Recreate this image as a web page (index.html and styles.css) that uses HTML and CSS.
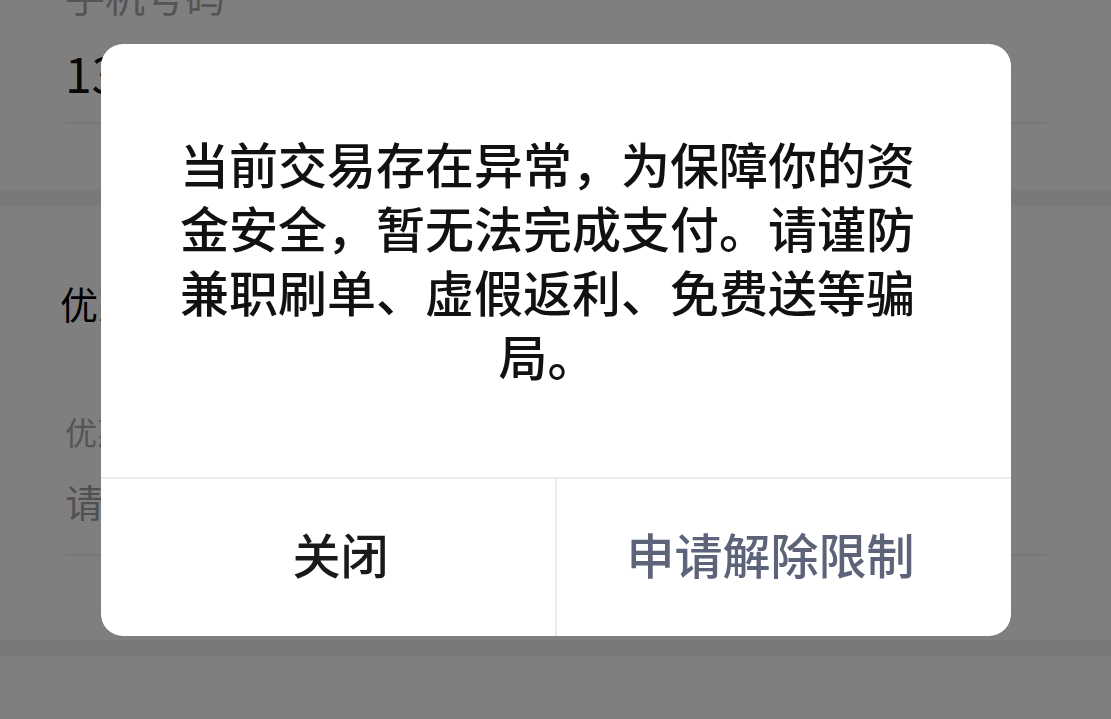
FILE: index.html
```html
<!DOCTYPE html>
<html lang="zh-CN">
<head>
<meta charset="utf-8">
<title>支付提示</title>
<link rel="stylesheet" href="styles.css">
</head>
<body>
<div class="page">
  <section class="card card-top">
    <div class="field">
      <div class="field-label">手机号码</div>
      <div class="field-value">13800000000</div>
    </div>
  </section>
  <div class="band"></div>
  <section class="card card-mid">
    <div class="card-title">优惠券</div>
    <div class="field field-b">
      <div class="field-label small">优惠码</div>
      <div class="field-input">请输入优惠码</div>
    </div>
  </section>
  <div class="band"></div>
  <section class="card card-bottom"></section>
</div>

<div class="overlay">
  <div class="dialog">
    <p class="dialog-msg">当前交易存在异常，为保障你的资金安全，暂无法完成支付。请谨防兼职刷单、虚假返利、免费送等骗局。</p>
    <div class="dialog-actions">
      <button class="btn btn-close">关闭</button>
      <button class="btn btn-appeal">申请解除限制</button>
    </div>
  </div>
</div>
</body>
</html>
```

FILE: styles.css
```css
* { box-sizing: border-box; }
html, body {
  margin: 0;
  padding: 0;
  height: 100%;
  overflow: hidden;
}
body {
  font-family: "Noto Sans CJK SC", "Noto Sans", sans-serif;
  background: #fff;
}
.page {
  margin-top: -30px;
}
.card {
  background: #fff;
  padding-left: 65px;
  padding-right: 64px;
}
.card-top {
  padding-bottom: 66px;
}
.field {
  border-bottom: 2px solid #eeeeee;
}
.field-label {
  font-size: 40px;
  line-height: 50px;
  color: #aaaaaa;
}
.field-label.small {
  font-size: 32px;
  line-height: 44px;
}
.field-value {
  margin-top: 22px;
  font-size: 48px;
  line-height: 60px;
  color: #111;
  padding-bottom: 20px;
}
.band {
  height: 16px;
  background: #f1f2f4;
}
.card-mid {
  padding-top: 72px;
  padding-bottom: 84px;
}
.card-title {
  margin-left: -5px;
  font-size: 38px;
  line-height: 50px;
  color: #000;
}
.field-b {
  margin-top: 81px;
}
.field-input {
  margin-top: 23px;
  font-size: 38px;
  line-height: 50px;
  color: #a0a0a0;
  padding-bottom: 28px;
}
.card-bottom {
  height: 200px;
}

.overlay {
  position: fixed;
  inset: 0;
  background: rgba(0, 0, 0, 0.5);
  display: flex;
  justify-content: center;
  align-items: flex-start;
  padding-top: 44px;
}
.dialog {
  width: 910px;
  height: 592px;
  background: #fff;
  border-radius: 22px;
  display: flex;
  flex-direction: column;
  overflow: hidden;
}
.dialog-msg {
  margin: 0;
  flex: 1;
  padding: 87px 88px 0 72px;
  font-size: 49px;
  line-height: 64px;
  font-weight: 500;
  color: #111;
  text-align: center;
}
.dialog-actions {
  height: 159px;
  display: flex;
  border-top: 2px solid #ebebeb;
}
.btn {
  flex: 1;
  border: 0;
  background: transparent;
  font-family: inherit;
  font-size: 48px;
  font-weight: 500;
  padding: 0 0 10px;
}
.btn-close {
  color: #1a1a1a;
  padding-left: 26px;
}
.btn-appeal {
  color: #5d6379;
  border-left: 2px solid #ebebeb;
  padding-right: 26px;
}
```
